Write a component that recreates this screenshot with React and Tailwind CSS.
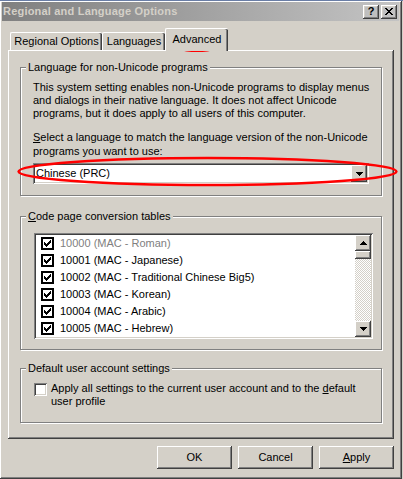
import React from "react";

// classic 3D edges
const raised =
  "shadow-[inset_-1px_-1px_#404040,inset_1px_1px_#ffffff,inset_-2px_-2px_#808080,inset_2px_2px_#d4d0c8]";
const sunken =
  "shadow-[inset_1px_1px_#808080,inset_-1px_-1px_#ffffff,inset_2px_2px_#404040,inset_-2px_-2px_#d4d0c8]";

function Pixels({ rows, color = "#000" }) {
  const w = rows[0].length;
  const h = rows.length;
  return (
    <svg width={w} height={h} viewBox={`0 0 ${w} ${h}`} shapeRendering="crispEdges">
      {rows.flatMap((r, y) =>
        r.split("").map((c, x) => (c === "#" ? <rect key={`${x}-${y}`} x={x} y={y} width="1" height="1" fill={color} /> : null))
      )}
    </svg>
  );
}

const CHECK = ["......#", ".....##", "#...###", "##.###.", "#####..", ".###...", "..#...."];
const CLOSE = ["##....##", ".##..##.", "..####..", "...##...", "..####..", ".##..##.", "##....##"];
const DOWN = ["#######", ".#####.", "..###..", "...#..."];
const UP = ["...#...", "..###..", ".#####.", "#######"];

const codePages = [
  { id: "10000 (MAC - Roman)", dim: true },
  { id: "10001 (MAC - Japanese)" },
  { id: "10002 (MAC - Traditional Chinese Big5)" },
  { id: "10003 (MAC - Korean)" },
  { id: "10004 (MAC - Arabic)" },
  { id: "10005 (MAC - Hebrew)" },
];

function Group({ title, className, children }) {
  return (
    <div className={`flex flex-col w-[362px] border border-[#808080] shadow-[inset_1px_1px_#ffffff,1px_1px_#ffffff] ${className}`}>
      <div className="-mt-[7px] ml-[5px] self-start whitespace-nowrap bg-[#d4d0c8] px-[2px] leading-[13px]">{title}</div>
      {children}
    </div>
  );
}

function Tab({ label, active, w }) {
  if (active) {
    return (
      <div
        className={`relative z-10 -mb-[1px] flex h-[23px] items-start justify-center rounded-t-[2px] border-l border-t border-white bg-[#d4d0c8] pt-[4px] shadow-[inset_-1px_0_#404040,inset_-2px_0_#808080] ${w}`}
      >
        {label}
      </div>
    );
  }
  return (
    <div
      className={`flex h-[18px] items-center justify-center rounded-t-[2px] border-l border-t border-white shadow-[inset_-1px_0_#404040,inset_-2px_0_#808080] ${w}`}
    >
      {label}
    </div>
  );
}

function Button({ children }) {
  return (
    <div className={`flex h-[23px] w-[75px] items-center justify-center ${raised}`}>{children}</div>
  );
}

export default function App() {
  return (
    <div className="relative h-[479px] w-[403px] overflow-hidden border-t border-[#6a7ea6] bg-[#d4d0c8] font-['Liberation_Sans',Arial,sans-serif] text-[11px] leading-[13px] text-black">
      <div className="flex h-[478px] w-[402px] flex-col border-b border-r border-[#404040] pl-[2px] pr-[2px] pt-[1px] shadow-[inset_1px_1px_#ffffff,inset_-1px_-1px_#808080]">
        {/* title bar */}
        <div className="flex h-[19px] items-center justify-between bg-linear-to-r from-[#808080] to-[#c4c4c4] pl-[1px] pr-[2px]">
          <span className="text-[11px] font-bold tracking-[0.2px] text-[#d4d0c8]">Regional and Language Options</span>
          <div className="flex gap-[2px]">
            <div className={`flex h-[14px] w-[16px] items-center justify-center pb-[1px] text-[11px] font-bold leading-none ${raised}`}>?</div>
            <div className={`flex h-[14px] w-[16px] items-center justify-center ${raised}`}>
              <Pixels rows={CLOSE} />
            </div>
          </div>
        </div>

        {/* tabs */}
        <div className="ml-[8px] mt-[7px] flex h-[22px] items-end">
          <Tab label="Regional Options" w="w-[92px]" />
          <Tab label="Languages" w="w-[63px]" />
          <Tab label="Advanced" w="w-[63px]" active />
        </div>

        {/* tab panel */}
        <div className="ml-[6px] flex h-[389px] w-[386px] flex-col pl-[12px] pt-[17px] shadow-[inset_-1px_-1px_#404040,inset_1px_1px_#ffffff,inset_-2px_-2px_#808080]">
          <Group title="Language for non-Unicode programs" className="h-[129px]">
            <div className="flex flex-col whitespace-nowrap px-[12px]">
              <p className="mt-[7px]">
                This system setting enables non-Unicode programs to display menus
                <br />
                and dialogs in their native language. It does not affect Unicode
                <br />
                programs, but it does apply to all users of this computer.
              </p>
              <p className="mt-[10px] leading-[14px]">
                <span className="underline">S</span>elect a language to match the language version of the non-Unicode
                <br />
                programs you want to use:
              </p>
              <div className={`mt-[5px] flex h-[21px] w-[336px] items-center bg-white pl-[3px] pr-[2px] ${sunken}`}>
                <span className="flex-1">Chinese (PRC)</span>
                <div className={`flex h-[17px] w-[16px] items-center justify-center bg-[#d4d0c8] ${raised}`}>
                  <Pixels rows={DOWN} />
                </div>
              </div>
            </div>
          </Group>

          <Group title={<><span className="underline">C</span>ode page conversion tables</>} className="mt-[20px] h-[134px]">
            <div className={`ml-[13px] mt-[10px] flex h-[106px] w-[339px] bg-white p-[2px] ${sunken}`}>
              <div className="flex flex-1 flex-col">
                {codePages.map((c) => (
                  <div key={c.id} className="flex h-[17px] items-center gap-[6px] pl-[5px]">
                    <div className="flex h-[13px] w-[13px] items-center justify-center border-2 border-black bg-white">
                      <Pixels rows={CHECK} />
                    </div>
                    <span className={c.dim ? "text-[#808080]" : ""}>{c.id}</span>
                  </div>
                ))}
              </div>
              <div className="flex w-[16px] flex-col">
                <div className={`flex h-[16px] items-center justify-center bg-[#d4d0c8] ${raised}`}>
                  <Pixels rows={UP} />
                </div>
                <div className={`h-[8px] bg-[#d4d0c8] ${raised}`} />
                <div className="flex-1 bg-[repeating-conic-gradient(#ffffff_0%_25%,#d4d0c8_0%_50%)] bg-[length:2px_2px]" />
                <div className={`flex h-[16px] items-center justify-center bg-[#d4d0c8] ${raised}`}>
                  <Pixels rows={DOWN} />
                </div>
              </div>
            </div>
          </Group>

          <Group title="Default user account settings" className="mt-[18px] h-[55px]">
            <div className="ml-[13px] mt-[7px] flex items-start gap-[4px]">
              <div className={`mt-[1px] h-[13px] w-[13px] shrink-0 bg-white ${sunken}`} />
              <p className="whitespace-nowrap">
                Apply all settings to the current user account and to the <span className="underline">d</span>efault
                <br />
                user profile
              </p>
            </div>
          </Group>
        </div>

        {/* dialog buttons */}
        <div className="ml-[6px] mt-[7px] flex w-[386px] justify-end gap-[6px]">
          <Button>OK</Button>
          <Button>Cancel</Button>
          <Button>
            <span>
              <span className="underline">A</span>pply
            </span>
          </Button>
        </div>
      </div>

      {/* red annotation marks */}
      <svg className="pointer-events-none absolute left-0 top-0" width="403" height="479">
        <ellipse cx="197" cy="41.5" rx="27" ry="8.5" fill="none" stroke="#ff0000" strokeWidth="2" />
        <ellipse cx="207.5" cy="170.5" rx="189" ry="13.5" fill="none" stroke="#ff0000" strokeWidth="2.5" />
      </svg>
    </div>
  );
}
